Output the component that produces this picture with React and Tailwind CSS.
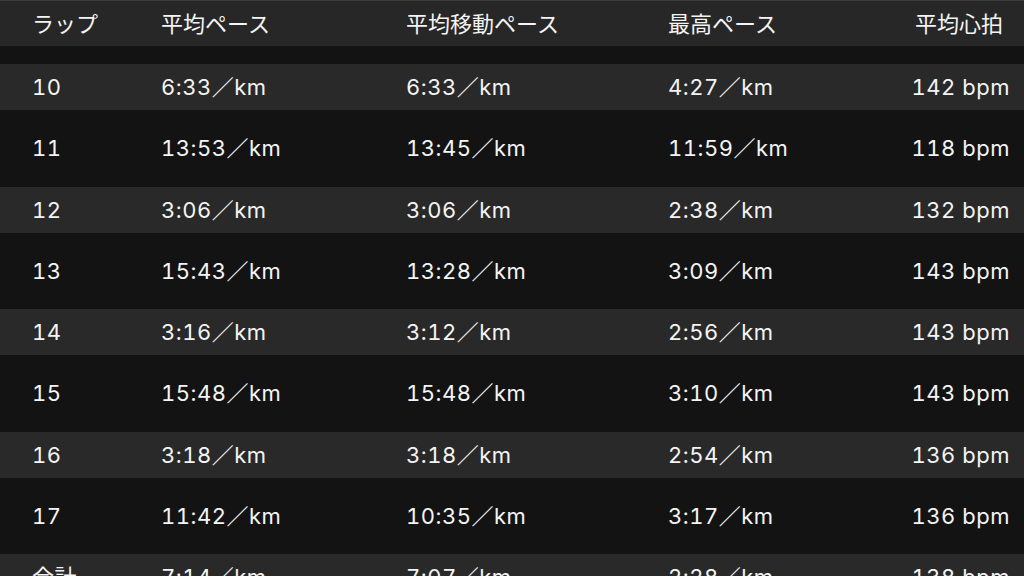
const rows = [
  { lap: '10', avg: '6:33／km', moving: '6:33／km', best: '4:27／km', hr: '142 bpm' },
  { lap: '11', avg: '13:53／km', moving: '13:45／km', best: '11:59／km', hr: '118 bpm' },
  { lap: '12', avg: '3:06／km', moving: '3:06／km', best: '2:38／km', hr: '132 bpm' },
  { lap: '13', avg: '15:43／km', moving: '13:28／km', best: '3:09／km', hr: '143 bpm' },
  { lap: '14', avg: '3:16／km', moving: '3:12／km', best: '2:56／km', hr: '143 bpm' },
  { lap: '15', avg: '15:48／km', moving: '15:48／km', best: '3:10／km', hr: '143 bpm' },
  { lap: '16', avg: '3:18／km', moving: '3:18／km', best: '2:54／km', hr: '136 bpm' },
  { lap: '17', avg: '11:42／km', moving: '10:35／km', best: '3:17／km', hr: '136 bpm' },
  { lap: '合計', avg: '7:14／km', moving: '7:07／km', best: '2:28／km', hr: '138 bpm' },
]

const cols = 'grid grid-cols-[129px_245px_262px_1fr] items-center pl-[32px]'

function Row({ r, light }) {
  return (
    <div
      className={`${cols} pr-[14px] tracking-[0.5px] tabular-nums ${
        light ? 'h-[46px] bg-[#292929]' : 'h-[76.6px] bg-[#131313]'
      }`}
    >
      <span>{r.lap}</span>
      <span>{r.avg}</span>
      <span>{r.moving}</span>
      <div className="flex justify-between">
        <span>{r.best}</span>
        <span>{r.hr}</span>
      </div>
    </div>
  )
}

export default function App() {
  return (
    <div
      className="w-[1024px] h-[576px] overflow-hidden bg-[#131313] text-[#f4f4f4] text-[22px] leading-none"
      style={{ fontFamily: 'Inter, "Noto Sans CJK JP", sans-serif' }}
    >
      <div className={`${cols} h-[46px] bg-[#272727] border-t border-[#3c3c3c] pr-[21px]`}>
        <span>ラップ</span>
        <span>平均ペース</span>
        <span>平均移動ペース</span>
        <div className="flex justify-between">
          <span>最高ペース</span>
          <span>平均心拍</span>
        </div>
      </div>
      <div className="h-[18px]" />
      {rows.map((r, i) => (
        <Row key={r.lap} r={r} light={i % 2 === 0} />
      ))}
    </div>
  )
}
